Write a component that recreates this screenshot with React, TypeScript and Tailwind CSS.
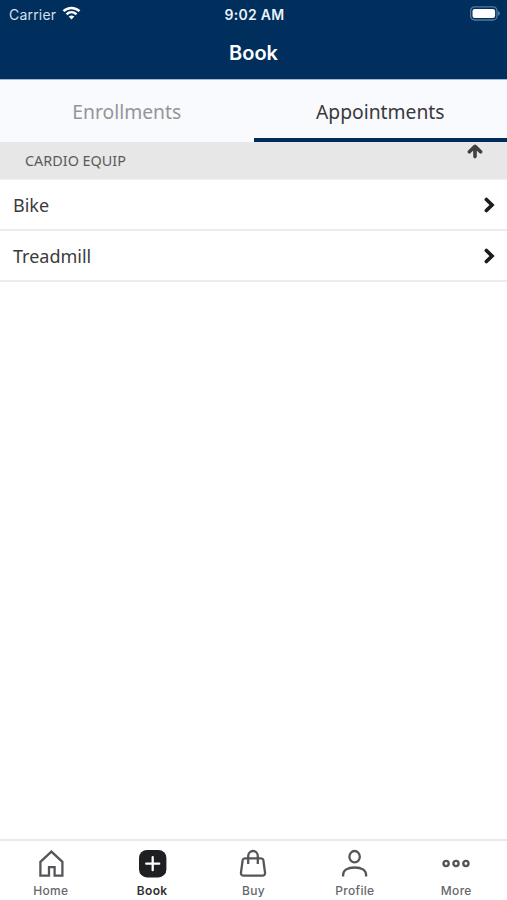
import React from 'react';

interface NavItem {
    label: string;
    icon: React.ReactNode;
    active?: boolean;
}

const equipment = ['Bike', 'Treadmill'];

const navItems: NavItem[] = [
    {
        label: 'Home',
        icon: <path d="M4.4 12.8 15.4 2.6 26.4 12.8V26.7H18.6V18.2H13V26.7H4.4Z" />
    },
    {
        label: 'Book',
        active: true,
        icon: (
            <>
                <rect x="2" y="1" width="27.4" height="27.4" rx="8" fill="#1d1f22" stroke="none" />
                <path d="M15.7 8.2V21.2M9.2 14.7H22.2" stroke="#ffffff" strokeWidth="2.3" strokeLinecap="round" />
            </>
        )
    },
    {
        label: 'Buy',
        icon: (
            <>
                <path d="M6.8 9.3H23.2Q25 9.3 25.3 10.9L27 23.4Q27.4 26.7 24.2 26.7H5.8Q2.6 26.7 3 23.4L4.7 10.9Q5 9.3 6.8 9.3Z" />
                <path d="M10.2 15V7A4.8 5 0 0 1 19.8 7V15" />
            </>
        )
    },
    {
        label: 'Profile',
        icon: (
            <>
                <ellipse cx="14.6" cy="7.7" rx="5.2" ry="5.7" />
                <path d="M3.1 27.5V26C3.1 21.2 7.6 18.5 14.6 18.5S26.1 21.2 26.1 26V27.5" />
            </>
        )
    },
    {
        label: 'More',
        icon: (
            <>
                <circle cx="5.1" cy="14.5" r="2.6" strokeWidth="2.4" />
                <circle cx="15" cy="14.5" r="2.6" strokeWidth="2.4" />
                <circle cx="24.9" cy="14.5" r="2.6" strokeWidth="2.4" />
            </>
        )
    }
];

const StatusBar: React.FC = () => (
    <div className="grid h-7 grid-cols-3 items-center pl-[9px] pr-[7px] font-['Inter',sans-serif] text-[14px]">
        <div className="flex items-center gap-[6px] text-[#d5e0ec]">
            <span className="tracking-[0.2px]">Carrier</span>
            <svg className="-mt-[2px]" width="19" height="14" viewBox="0 0 18 14" fill="none" stroke="#ffffff" strokeWidth="2.5">
                <path d="M1 5.2C5.6.8 12.4.8 17 5.2" />
                <path d="M4 8.3C6.9 5.6 11.1 5.6 14 8.3" />
                <path d="M6.2 10.6Q9 8.3 11.8 10.6L9 13.5Z" fill="#ffffff" stroke="none" />
            </svg>
        </div>
        <span className="text-center font-semibold tracking-[0.25px] text-[#eaf1f8]">9:02 AM</span>
        <svg className="-mt-[2px] justify-self-end" width="31" height="15" viewBox="0 0 31 15">
            <rect x="1.6" y=".8" width="26.4" height="13.2" rx="4" fill="none" stroke="#54799f" strokeWidth="1.3" />
            <rect x="3.5" y="2.9" width="22.6" height="9" rx="2.2" fill="#ffffff" />
            <path d="M29 5Q30.9 5.7 30.9 7.4T29 9.8Z" fill="#54799f" />
        </svg>
    </div>
);

export default function App() {
    return (
        <div className="flex h-screen w-full flex-col bg-white font-['Noto_Sans',sans-serif]">
            <header className="h-[79px] shrink-0 bg-[#002e5d] text-white">
                <StatusBar />
                <h1 className="text-center font-['Inter',sans-serif] text-[20px] leading-[50px] font-semibold">Book</h1>
            </header>

            <div className="grid h-[63px] shrink-0 grid-cols-2 border-t border-[#9db8d6] bg-[#f8fafd] text-[19.3px]">
                <button className="border-b-4 border-transparent pt-[7px] text-[#949599]">Enrollments</button>
                <button className="border-b-4 border-[#002b5c] pt-[7px] text-[#38393d]">Appointments</button>
            </div>

            <div className="flex h-[38px] shrink-0 items-start justify-between border-b border-[#f0f0f0] bg-[#e7e7e7] pr-[24px] pl-[25px]">
                <span className="text-[14.4px] leading-[38px] text-[#5b5b5b]">CARDIO EQUIP</span>
                <svg className="mt-[2px]" width="16" height="15" viewBox="0 0 16 15" fill="none" stroke="#404040" strokeWidth="3.6" strokeLinecap="round" strokeLinejoin="round">
                    <path d="M8 12.6V2.6M2.4 7.8 8 2.4 13.6 7.8" />
                </svg>
            </div>

            <main className="flex-1">
                {equipment.map((name) => (
                    <button key={name} className="flex h-[51px] w-full items-center justify-between border-b-2 border-[#ececec] pr-3 pl-[13px] text-lg text-[#3b3b3b]">
                        {name}
                        <svg width="11" height="16" viewBox="0 0 11 16" fill="none" stroke="#1c1c1c" strokeWidth="3.7" strokeLinecap="round">
                            <path d="M2.4 2.5 8 8 2.4 13.5" />
                        </svg>
                    </button>
                ))}
            </main>

            <nav className="grid h-[61px] shrink-0 grid-cols-5 border-t-2 border-[#e9e9e9] bg-white font-['Inter',sans-serif]">
                {navItems.map((item) => (
                    <button key={item.label} className="flex flex-col items-center pt-[8px]">
                        <svg width="30" height="30" viewBox="0 0 30 30" fill="none" stroke="#54565a" strokeWidth="2.3">
                            {item.icon}
                        </svg>
                        <span className={`mt-[3px] text-[12px] leading-[18px] tracking-[0.3px] ${item.active ? 'font-semibold text-[#2f3033]' : 'font-medium text-[#66686c]'}`}>
                            {item.label}
                        </span>
                    </button>
                ))}
            </nav>
        </div>
    );
}
